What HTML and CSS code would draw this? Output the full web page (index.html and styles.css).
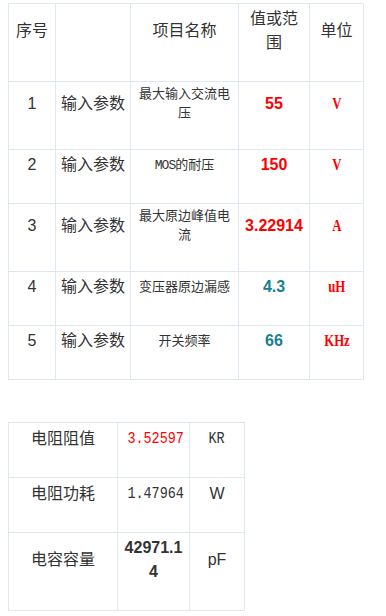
FILE: index.html
```html
<!DOCTYPE html>
<html lang="zh-CN">
<head>
<meta charset="utf-8">
<title>参数表</title>
<link rel="stylesheet" href="styles.css">
</head>
<body>
<table class="grid grid-main">
  <colgroup>
    <col class="w47"><col class="w75"><col class="w108"><col class="w71"><col class="w54">
  </colgroup>
  <tr>
    <td>序号</td>
    <td></td>
    <td>项目名称</td>
    <td>值或范围</td>
    <td>单位</td>
  </tr>
  <tr>
    <td>1</td>
    <td>输入参数</td>
    <td class="item">最大输入交流电压</td>
    <td class="val red">55</td>
    <td class="unit"><span class="narrow">V</span></td>
  </tr>
  <tr>
    <td>2</td>
    <td>输入参数</td>
    <td class="item"><span class="mono-s">MOS</span>的耐压</td>
    <td class="val red">150</td>
    <td class="unit"><span class="narrow">V</span></td>
  </tr>
  <tr>
    <td>3</td>
    <td>输入参数</td>
    <td class="item">最大原边峰值电流</td>
    <td class="val red">3.22914</td>
    <td class="unit"><span class="narrow">A</span></td>
  </tr>
  <tr>
    <td>4</td>
    <td>输入参数</td>
    <td class="item">变压器原边漏感</td>
    <td class="val teal">4.3</td>
    <td class="unit"><span class="narrow">uH</span></td>
  </tr>
  <tr>
    <td>5</td>
    <td>输入参数</td>
    <td class="item">开关频率</td>
    <td class="val teal">66</td>
    <td class="unit"><span class="narrow">KHz</span></td>
  </tr>
</table>

<table class="grid grid-sub">
  <colgroup>
    <col class="w109"><col class="w72"><col class="w55">
  </colgroup>
  <tr>
    <td>电阻阻值</td>
    <td><span class="mono red">3.52597</span></td>
    <td><span class="mono">KR</span></td>
  </tr>
  <tr>
    <td>电阻功耗</td>
    <td><span class="mono">1.47964</span></td>
    <td class="latin">W</td>
  </tr>
  <tr>
    <td>电容容量</td>
    <td class="val dark">42971.14</td>
    <td class="latin">pF</td>
  </tr>
</table>
</body>
</html>
```

FILE: styles.css
```css
html, body {
  background: #ffffff;
}

body {
  margin: 3px 8px 8px;
  font-family: "Liberation Sans", "Noto Sans CJK SC", sans-serif;
  font-size: 16px;
  line-height: 24px;
  color: #333333;
}

.grid {
  border-collapse: collapse;
  table-layout: fixed;
}

.grid-main {
  width: 355px;
}

.grid-sub {
  width: 236px;
  margin-top: 42px;
}

.w47 { width: 47px; }
.w75 { width: 75px; }
.w108 { width: 108px; }
.w71 { width: 71px; }
.w54 { width: 54px; }
.w109 { width: 109px; }
.w72 { width: 72px; }
.w55 { width: 55px; }

.grid td {
  border: 1px solid #dfe8f1;
  padding: 3px 4px 26px;
  text-align: center;
  vertical-align: middle;
  word-break: break-all;
}

.item {
  font-family: "Liberation Mono", "Noto Sans CJK SC", monospace;
  font-size: 13px;
  line-height: 19px;
}

.mono-s {
  font-family: "Liberation Mono", monospace;
  letter-spacing: -1px;
}

.val {
  font-weight: bold;
  font-family: "Liberation Sans", Arial, sans-serif;
}

.red { color: #ff0000; }
.teal { color: #17808f; }
.dark { color: #333333; }

.unit {
  color: #ff0000;
  font-family: "Liberation Serif", serif;
  font-weight: bold;
}

.narrow {
  display: inline-block;
  transform: scaleX(0.8);
}

.mono {
  display: inline-block;
  white-space: nowrap;
  font-family: "Liberation Mono", monospace;
  transform: scaleX(0.84);
}

.latin {
  font-family: "Liberation Sans", Arial, sans-serif;
}
```
